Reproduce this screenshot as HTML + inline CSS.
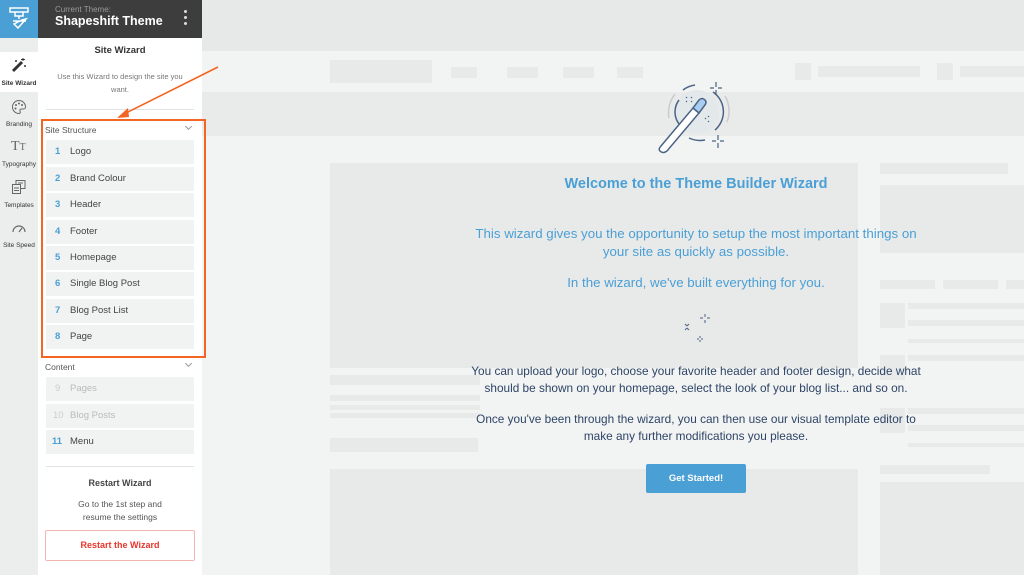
<!DOCTYPE html>
<html><head><meta charset="utf-8"><style>
*{margin:0;padding:0;box-sizing:border-box}
body{width:1024px;height:575px;overflow:hidden;position:relative;background:#f2f4f3;font-family:"Liberation Sans",sans-serif}
.a{position:absolute}
.g{position:absolute;background:#e8eaea}
.item{position:absolute;left:46px;width:148px;height:24px;background:#f1f2f2;font-size:9.5px;color:#444;line-height:24px}
.item b{position:absolute;left:9px;color:#4a9fd5;font-weight:bold}
.item span{position:absolute;left:24px}
.tab{position:absolute;left:0;width:38px;text-align:center;font-size:6.5px;color:#333;font-weight:bold}
</style></head><body>
<div class="a" style="left:202px;top:0;width:822px;height:51px;background:#e6e9e8"></div>
<div class="a" style="left:202px;top:92px;width:822px;height:44px;background:#e9ebea"></div>
<div class="g" style="left:330px;top:60px;width:102px;height:23px"></div>
<div class="g" style="left:451px;top:67px;width:26px;height:11px"></div>
<div class="g" style="left:507px;top:67px;width:31px;height:11px"></div>
<div class="g" style="left:563px;top:67px;width:31px;height:11px"></div>
<div class="g" style="left:617px;top:67px;width:26px;height:11px"></div>
<div class="g" style="left:795px;top:63px;width:16px;height:17px"></div>
<div class="g" style="left:818px;top:66px;width:102px;height:11px"></div>
<div class="g" style="left:937px;top:63px;width:16px;height:17px"></div>
<div class="g" style="left:960px;top:66px;width:64px;height:11px"></div>
<div class="g" style="left:330px;top:163px;width:528px;height:205px"></div>
<div class="g" style="left:330px;top:375px;width:150px;height:10px"></div>
<div class="g" style="left:330px;top:395px;width:150px;height:6px"></div>
<div class="g" style="left:330px;top:405px;width:150px;height:5px"></div>
<div class="g" style="left:330px;top:413px;width:150px;height:5px"></div>
<div class="g" style="left:330px;top:438px;width:148px;height:14px"></div>
<div class="g" style="left:330px;top:469px;width:528px;height:106px"></div>
<div class="g" style="left:880px;top:163px;width:128px;height:11px"></div>
<div class="g" style="left:880px;top:185px;width:144px;height:68px"></div>
<div class="g" style="left:880px;top:280px;width:55px;height:9px"></div>
<div class="g" style="left:943px;top:280px;width:55px;height:9px"></div>
<div class="g" style="left:1006px;top:280px;width:18px;height:9px"></div>
<div class="g" style="left:880px;top:303px;width:25px;height:25px"></div>
<div class="g" style="left:908px;top:303px;width:116px;height:6px"></div>
<div class="g" style="left:908px;top:320px;width:116px;height:6px"></div>
<div class="g" style="left:908px;top:339px;width:116px;height:4px"></div>
<div class="g" style="left:880px;top:355px;width:25px;height:25px"></div>
<div class="g" style="left:908px;top:355px;width:116px;height:6px"></div>
<div class="g" style="left:880px;top:408px;width:25px;height:25px"></div>
<div class="g" style="left:908px;top:408px;width:116px;height:6px"></div>
<div class="g" style="left:908px;top:425px;width:116px;height:6px"></div>
<div class="g" style="left:908px;top:443px;width:116px;height:4px"></div>
<div class="g" style="left:880px;top:465px;width:110px;height:9px"></div>
<div class="g" style="left:880px;top:482px;width:144px;height:93px"></div>

<svg class="a" style="left:655px;top:80px" width="82" height="76" viewBox="0 0 82 76">
<circle cx="42" cy="32" r="22" fill="#e3e8ea"/>
<path d="M14 38 A30 30 0 0 1 20 14" stroke="#c8cccf" stroke-width="1.5" fill="none"/>
<path d="M70 16 A30 30 0 0 1 72 42" stroke="#c8cccf" stroke-width="1.5" fill="none"/>
<path d="M28 10 A26 26 0 0 1 40 5" stroke="#4a6384" stroke-width="1.5" fill="none"/>
<path d="M24 20 A20 20 0 0 0 24 44" stroke="#4a6384" stroke-width="1.5" fill="none"/>
<path d="M58 12 A24 24 0 0 1 60 50" stroke="#4a6384" stroke-width="1.5" fill="none"/>
<path d="M34 58 A26 26 0 0 0 50 60" stroke="#4a6384" stroke-width="1.5" fill="none"/>
<path d="M6 66 L38 28 L44 33 L12 71 Q8 74 5 71 Q3 69 6 66Z" fill="#fff" stroke="#4a6384" stroke-width="1.5"/>
<path d="M38 28 L44 20 Q47 17 50 20 Q52 22 50 25 L44 33Z" fill="#a9cdf0" stroke="#4a6384" stroke-width="1.5"/>
<path d="M61 2v5M61 10v5M55 8h4M63 8h4M63 55v5M63 63v5M57 61h4M65 61h4" stroke="#4a6384" stroke-width="1.2"/>
<path d="M31 17l1 1M36 17l1 1M31 21l1 1M36 21l1 1M50 38l1 1M53 36l1 1M53 41l1 1" stroke="#4a6384" stroke-width="1.2"/>
</svg>

<div class="a" style="left:452px;top:176px;width:488px;text-align:center;font-size:14.5px;color:#4a9fd5;font-weight:bold">Welcome to the Theme Builder Wizard</div>
<div class="a" style="left:440px;top:225px;width:512px;text-align:center;font-size:13.3px;line-height:18px;color:#4a9fd5">This wizard gives you the opportunity to setup the most important things on<br>your site as quickly as possible.</div>
<div class="a" style="left:440px;top:275px;width:512px;text-align:center;font-size:13.3px;color:#4a9fd5">In the wizard, we've built everything for you.</div>
<svg class="a" style="left:677px;top:312px" width="40" height="32"><path d="M28 2v3M28 8v3M23 6h3M30 6h3M8 12l2 2M12 12l-2 2M8 18l2-2M12 18l-2-2M23 24v2M23 28v2M20 27h2M24 27h2" stroke="#4a6384" stroke-width="1"/></svg>
<div class="a" style="left:440px;top:363px;width:512px;text-align:center;font-size:11.8px;line-height:17px;color:#2e4466">You can upload your logo, choose your favorite header and footer design, decide what<br>should be shown on your homepage, select the look of your blog list... and so on.</div>
<div class="a" style="left:440px;top:411px;width:512px;text-align:center;font-size:11.8px;line-height:17px;color:#2e4466">Once you've been through the wizard, you can then use our visual template editor to<br>make any further modifications you please.</div>
<div class="a" style="left:646px;top:464px;width:100px;height:29px;background:#4a9fd5;border-radius:2px;color:#fff;font-size:9.5px;font-weight:bold;text-align:center;line-height:29px">Get Started!</div>

<div class="a" style="left:0;top:0;width:38px;height:575px;background:#eceeee"></div>
<div class="a" style="left:0;top:0;width:38px;height:38px;background:#4a9fd5"></div>
<svg class="a" style="left:8px;top:6px" width="22" height="24"><rect x="2" y="2" width="18" height="4" fill="none" stroke="#fff" stroke-width="1.5"/><path d="M7 6v4h8V6M11 10v3M5 15h13M6 18l4 4 8-9-4 1z" stroke="#fff" stroke-width="1.5" fill="none"/></svg>
<div class="a" style="left:38px;top:0;width:164px;height:38px;background:#3d3d3d"></div>
<div class="a" style="left:55px;top:5px;font-size:8px;color:#9a9a9a">Current Theme:</div>
<div class="a" style="left:55px;top:14px;font-size:12.5px;color:#fff;font-weight:bold">Shapeshift Theme</div>
<div class="a" style="left:184px;top:10px;width:3px;height:3px;background:#ddd;border-radius:50%;box-shadow:0 6px 0 #ddd,0 12px 0 #ddd"></div>
<div class="a" style="left:38px;top:38px;width:164px;height:537px;background:#fff"></div>
<div class="a" style="left:0;top:52px;width:38px;height:40px;background:#fff"></div>
<svg class="a" style="left:11px;top:57px" width="16" height="16"><path d="M2 14L11 5" stroke="#333" stroke-width="3"/><path d="M12 1v3M10 2.5h4M5 3v2M4 4h2M14 8v2M13 9h2" stroke="#333" stroke-width="1"/></svg>
<div class="tab" style="top:80px">Site Wizard</div>
<svg class="a" style="left:11px;top:99px" width="16" height="16"><path d="M8 1.5a6.5 6.5 0 1 0 0 13c1.5 0 1.5-1.5 1-2.5s0-2 1.5-2h2a2 2 0 0 0 2-2A6.5 6.5 0 0 0 8 1.5z" fill="none" stroke="#666"/><circle cx="5" cy="6" r="1" fill="#666"/><circle cx="8" cy="4.5" r="1" fill="#666"/><circle cx="11" cy="6" r="1" fill="#666"/><circle cx="4.5" cy="9.5" r="1" fill="#666"/></svg>
<div class="tab" style="top:121px;font-weight:normal">Branding</div>
<div class="a" style="left:11px;top:139px;font-size:14px;color:#666;font-family:'Liberation Serif',serif">T<span style="font-size:10px">T</span></div>
<div class="tab" style="top:161px;font-weight:normal">Typography</div>
<svg class="a" style="left:11px;top:179px" width="16" height="16"><rect x="5" y="1.5" width="9" height="8" fill="none" stroke="#666"/><rect x="1.5" y="5.5" width="8" height="9" fill="#eceeee" stroke="#666"/><path d="M3 9h5M3 11.5h5M7 4h5" stroke="#666"/></svg>
<div class="tab" style="top:202px;font-weight:normal">Templates</div>
<svg class="a" style="left:11px;top:222px" width="16" height="12"><path d="M2 10A6 6 0 1 1 14 10" fill="none" stroke="#666" stroke-width="1.2"/><path d="M8 10L11 6" stroke="#666" stroke-width="1.2"/></svg>
<div class="tab" style="top:242px;font-weight:normal">Site Speed</div>

<div class="a" style="left:38px;top:45px;width:164px;text-align:center;font-size:9.5px;font-weight:bold;color:#333">Site Wizard</div>
<div class="a" style="left:48px;top:70px;width:144px;text-align:center;font-size:7.5px;line-height:13px;color:#777">Use this Wizard to design the site you want.</div>
<div class="a" style="left:46px;top:109px;width:148px;height:1px;background:#e2e2e2"></div>
<div class="a" style="left:45px;top:125px;font-size:8.5px;color:#555">Site Structure</div>
<div class="a" style="left:186px;top:124px;width:5px;height:5px;border-right:1px solid #999;border-bottom:1px solid #999;transform:rotate(45deg)"></div>
<div class="item" style="top:140px"><b>1</b><span>Logo</span></div>
<div class="item" style="top:167px"><b>2</b><span>Brand Colour</span></div>
<div class="item" style="top:193px"><b>3</b><span>Header</span></div>
<div class="item" style="top:220px"><b>4</b><span>Footer</span></div>
<div class="item" style="top:246px"><b>5</b><span>Homepage</span></div>
<div class="item" style="top:272px"><b>6</b><span>Single Blog Post</span></div>
<div class="item" style="top:299px"><b>7</b><span>Blog Post List</span></div>
<div class="item" style="top:325px"><b>8</b><span>Page</span></div>
<div class="a" style="left:41px;top:119px;width:165px;height:239px;border:2px solid #f26522"></div>
<div class="a" style="left:45px;top:362px;font-size:8.5px;color:#555">Content</div>
<div class="a" style="left:186px;top:361px;width:5px;height:5px;border-right:1px solid #999;border-bottom:1px solid #999;transform:rotate(45deg)"></div>
<div class="item" style="top:377px;color:#bbb"><b style="color:#ccc;font-weight:normal">9</b><span>Pages</span></div>
<div class="item" style="top:404px;color:#bbb"><b style="color:#ccc;font-weight:normal;left:7px">10</b><span>Blog Posts</span></div>
<div class="item" style="top:430px"><b style="left:6px">11</b><span>Menu</span></div>
<div class="a" style="left:46px;top:466px;width:148px;height:1px;background:#e2e2e2"></div>
<div class="a" style="left:38px;top:478px;width:164px;text-align:center;font-size:9px;font-weight:bold;color:#444">Restart Wizard</div>
<div class="a" style="left:38px;top:498px;width:164px;text-align:center;font-size:8.5px;line-height:13px;color:#555">Go to the 1st step and<br>resume the settings</div>
<div class="a" style="left:45px;top:530px;width:150px;height:31px;border:1px solid #f4b5b0;border-radius:2px;text-align:center;line-height:29px;font-size:9px;font-weight:bold;color:#e8352a">Restart the Wizard</div>

<svg class="a" style="left:110px;top:60px" width="115" height="65"><path d="M108 7L12 55" stroke="#f26522" stroke-width="1.6"/><path d="M7 58L18 48L19 57Z" fill="#f26522"/></svg>
</body></html>
